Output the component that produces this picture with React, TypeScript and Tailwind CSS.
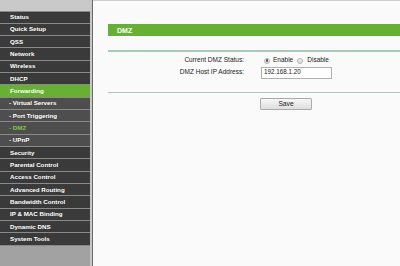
import React from 'react';

type MenuItem = {
	label: string;
	sub?: boolean;
	active?: boolean;
	current?: boolean;
};

const menu: MenuItem[] = [
	{ label: 'Status' },
	{ label: 'Quick Setup' },
	{ label: 'QSS' },
	{ label: 'Network' },
	{ label: 'Wireless' },
	{ label: 'DHCP' },
	{ label: 'Forwarding', active: true },
	{ label: '- Virtual Servers', sub: true },
	{ label: '- Port Triggering', sub: true },
	{ label: '- DMZ', sub: true, current: true },
	{ label: '- UPnP', sub: true },
	{ label: 'Security' },
	{ label: 'Parental Control' },
	{ label: 'Access Control' },
	{ label: 'Advanced Routing' },
	{ label: 'Bandwidth Control' },
	{ label: 'IP & MAC Binding' },
	{ label: 'Dynamic DNS' },
	{ label: 'System Tools' },
];

const font = { fontFamily: '"Liberation Sans", Arial, sans-serif' };

const SideItem = ({ item }: { item: MenuItem }) => {
	let bg = 'bg-[#3a3a3a]';
	if (item.sub) bg = 'bg-[#4e4e4e]';
	if (item.active) bg = 'bg-[#67b132]';
	return (
		<div
			className={`h-[12.33px] shrink-0 border-t border-[#8a8a8a] flex items-center font-bold text-[6.2px] leading-none ${bg} ${
				item.sub ? 'pl-[9px]' : 'pl-[10px]'
			} ${item.current ? 'text-[#7ccc3c]' : 'text-white'}`}
		>
			{item.label}
		</div>
	);
};

const Radio = ({ checked }: { checked?: boolean }) => (
	<span className="w-[6px] h-[6px] rounded-full border border-[#b5b5b5] bg-gradient-to-b from-[#f4f4f4] to-[#d6d6d6] flex items-center justify-center">
		{checked && <span className="w-[2.5px] h-[2.5px] rounded-full bg-[#555]" />}
	</span>
);

export default function App() {
	return (
		<div className="w-[400px] h-[266px] flex overflow-hidden bg-[#fafafa]" style={font}>
			<div className="w-[90px] h-full flex flex-col bg-[#a2a2a2]">
				<div className="h-[10.5px] shrink-0 bg-[#c9c9c9]" />
				{menu.map((item) => (
					<SideItem key={item.label} item={item} />
				))}
				<div className="border-t border-[#8a8a8a]" />
			</div>
			<div className="w-[2px] h-full bg-[#c6c6c6]" />
			<div className="w-[1px] h-full bg-[#6a6a6a]" />
			<div className="flex-1 h-full border-t border-[#cfcfcf] pl-[15px] pt-[23px] flex flex-col">
				<div className="h-[12px] bg-[#67b132] flex items-center pl-[9px] text-white font-bold text-[7px] leading-none">
					DMZ
				</div>
				<div className="mt-[14px] h-[1.5px] bg-[#a6cbb6]" />
				<div className="mt-[3px] h-[12px] flex items-center text-[6.5px] text-[#222] leading-none">
					<div className="w-[136px] text-right">Current DMZ Status:</div>
					<div className="ml-[20px] flex items-center">
						<Radio checked />
						<span className="ml-[3px]">Enable</span>
						<span className="ml-[4px]">
							<Radio />
						</span>
						<span className="ml-[4px]">Disable</span>
					</div>
				</div>
				<div className="h-[12px] flex items-center text-[6.5px] text-[#222] leading-none">
					<div className="w-[136px] text-right">DMZ Host IP Address:</div>
					<div className="ml-[17px] w-[71px] h-[12px] border border-[#b0b0b0] bg-white flex items-center pl-[2px] text-[6.3px]">
						192.168.1.20
					</div>
				</div>
				<div className="mt-[13px] h-[1.5px] bg-[#a6cbb6]" />
				<div className="mt-[5px] flex">
					<div className="ml-[152px] w-[52px] h-[12px] border border-[#aaaaaa] rounded-[1px] bg-gradient-to-b from-[#f7f7f7] to-[#dedede] flex items-center justify-center text-[6.7px] text-[#222] leading-none">
						Save
					</div>
				</div>
			</div>
		</div>
	);
}
